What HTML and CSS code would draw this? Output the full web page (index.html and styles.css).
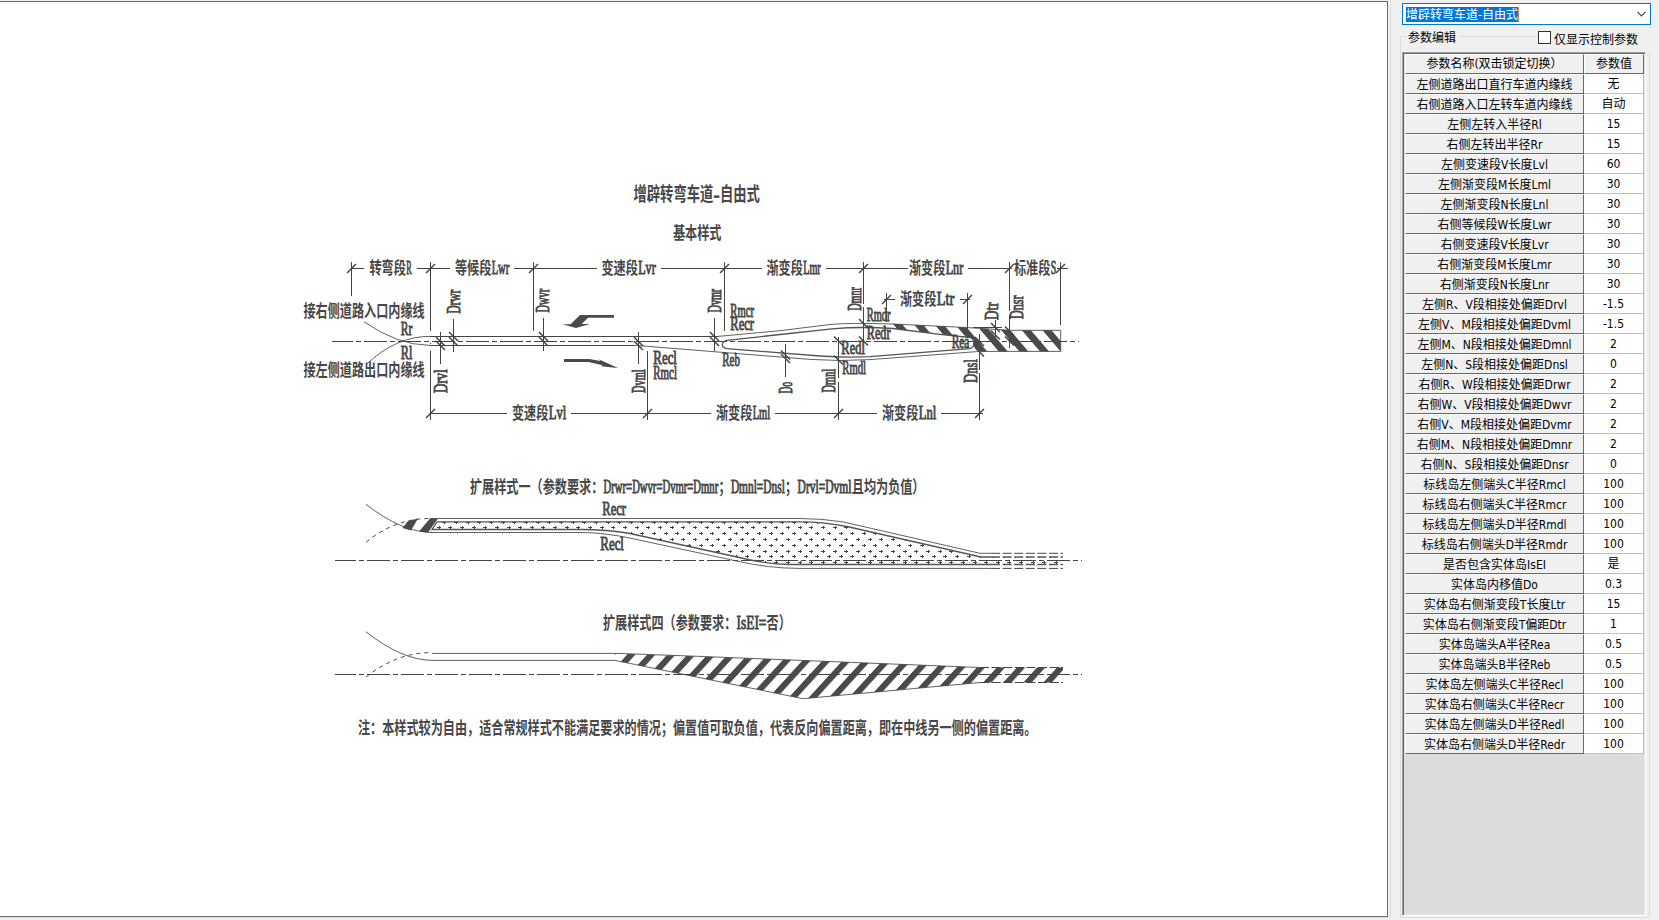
FILE: index.html
```html
<!DOCTYPE html>
<html lang="zh-CN">
<head>
<meta charset="utf-8">
<title>增辟转弯车道-自由式</title>
<link rel="stylesheet" href="styles.css">
</head>
<body>
<main class="app">
<section class="preview">
<svg class="drawing" width="1387" height="914" viewBox="0 2 1387 914">
<defs>
<pattern id="hatchBack" patternUnits="userSpaceOnUse" width="20.6" height="100" patternTransform="translate(1021.7 330) skewX(40.4)"><rect class="ink" width="9" height="100"/></pattern>
<pattern id="hatchFwd" patternUnits="userSpaceOnUse" width="20.08" height="100" patternTransform="translate(615.5 667.3) skewX(-42.4)"><rect class="ink" width="8.3" height="100"/></pattern>
<clipPath id="islandArea"><path d="M1062 564.5H790Q765 564 737 557L630 533.5Q608 529.5 580 529.5H432L437 521.8H800Q825 522 847 526.5L981 557H1062Z"/></clipPath>
</defs>

<g class="line">
<path class="center" d="M332 341.5H1079"/>
<path class="crisp" d="M430 336.5H718M430 345.5H634M351.5 268.5H364M417 268.5H450M514 268.5H597M661 268.5H762M826 268.5H908M968 268.5H1012M1057 268.5H1068M884 299.5H895M960 299.5H970M430 413.5H507M571 413.5H711M775 413.5H877M941 413.5H983"/>
<path class="crisp" d="M351.5 262V296M430.5 262V331M430.5 343V344M430.5 351V420M533.5 262V331M724.5 262V331M647.5 351V420M1060.5 262V325M886.5 293V322M967.5 293V329M863.5 262V304M863.5 307V345M1009.5 262V311M1009.5 315V348M838.5 337V378M838.5 382V420M979.5 334V370M979.5 373V420"/>
<path class="crisp" d="M440.5 332V364M453.5 319V352M543.5 318V351M638.5 332V364M714.5 318V351M785.5 344V377M995.5 320V338M973 327.5H1002"/>
<path class="thin" d="M364 321.7Q397 345 430 345.4M366.7 364Q397 336 430 336.4"/>
<path class="thin" d="M718 336.4L780 330.7L830 324.5Q850 322.6 893 324L966 327.5L1010 330.3H1060.7V351.4H980L870 359.6Q840 361.5 810 359.4L647 346.3L634 345.4"/>
<path class="edge" d="M727 340.4L780 334.5L832 328.8Q860 326.4 893 328.5L940 334.3L970 337.5C975 339 975 347.5 970 348.6L870 356.6Q845 357.8 820 356L727 348.6C721 347.5 720.5 342 727 340.4Z"/>
</g>
<path fill="url(#hatchBack)" d="M892 323.8L966 327.5L1010 330.3H1060.7V351.4H980L974 347V340L970 337.5L940 334.3L893 328.5Z"/>
<g transform="translate(530 170) scale(.33333)" class="ink">
<path d="M252 435H150L122 463H97L138 474L180 462H155L174 443H252Z"/>
<path d="M102 567H178L212 573L206 568L264 594L212 589L219 586L175 576H102Z"/>
</g>

<g class="line">
<path class="center" d="M335 560.5H1082"/>
<path class="thin" d="M366 504.3Q402 532.5 433 532.5"/>
<path class="dash" d="M366 542.3Q395 518.5 430 518.5"/>
<path class="thin" d="M430 532.5H582Q605 532.7 632 538.5L736.7 561Q768 568.4 800 568.4H991M430 518.5H800Q822 518.5 843 521.9L980 553.3H991"/>
<path class="edge" d="M991 564.5H790Q765 564 737 557L630 533.5Q608 529.5 580 529.5H432L437 521.8H800Q825 522 847 526.5L981 557H991"/>
<path class="island" d="M991 553.3H1063M991 568.4H1063"/>
<path class="island edge" d="M991 557H1063M991 564.5H1063"/>
<g clip-path="url(#islandArea)"><path id="crosses" class="crisp" d=""/></g>
</g>
<path class="ink" d="M408 521L418 518.5L411 530.5L402.5 528ZM430 518.5H438L428 532.5L419 531.5Z"/>

<path fill="url(#hatchFwd)" d="M615 653.4L700 656.4L980 667.5H1063V682.5H980L803 698.7L615 660.4Z"/>
<g class="line">
<path class="center" d="M335 674.5H1082"/>
<path class="thin" d="M366 631.7Q402 660.4 433 660.4H615L803 698.7L980 682.5M432 653.4H618L700 656.4L980 667.5"/>
<path class="dash" d="M366 677Q397 652.7 430 652.7"/>
<path class="island" d="M980 667.5H1063M980 682.5H1063"/>
</g>
<g id="labels" class="labels"></g>
</svg>
</section>

<aside class="panel">
<div class="combo"><span class="selected">增辟转弯车道-自由式</span><svg class="arrow" width="9" height="6" viewBox="0 0 9 6"><path d="M.5.8L4.5 4.8L8.5.8"/></svg></div>
<div class="group">
<div class="legend"><span class="stub"></span><span class="caption">参数编辑</span><span class="rule"></span><label class="only"><span class="box"></span><span class="only-text">仅显示控制参数</span></label></div>
<div class="frame"><div class="grid" id="grid"><div class="name head">参数名称(双击锁定切换）</div><div class="value head">参数值</div></div></div>
</div>
</aside>
</main>
<script src="script.js"></script>
</body>
</html>
```

FILE: styles.css
```css
* { box-sizing: border-box; }
body { margin: 0; background: #f0f0f0; color: #000; font: 12px "DejaVu Sans Condensed", "Noto Sans CJK SC", sans-serif; overflow: hidden; }
.app { display: flex; width: 1659px; height: 920px; }
.preview { width: 1391px; height: 918px; flex: none; border-right: 1px solid #dcdcdc; border-bottom: 1px solid #dcdcdc; padding: 1px 2px 0 0; }
.drawing { display: block; width: 1388px; height: 916px; background: #fff; border: solid #696969; border-width: 1px 1px 1px 0; }
.line { fill: none; stroke: #444; stroke-width: 1; }
.crisp { shape-rendering: crispEdges; }
.center { stroke-dasharray: 23 3 5 3; stroke-dashoffset: 2; shape-rendering: crispEdges; }
.thin { stroke-width: .85; }
.edge { stroke-width: 1.3; stroke: #555; }
.dash { stroke-dasharray: 4 4; }
.island { stroke-dasharray: 9 2.6; }
.ink { fill: #4a4a4a; }
.tick { stroke: #444; stroke-width: 1.5; }
.labels { fill: #484848; }
.cjk { font-family: "Noto Sans CJK SC", sans-serif; font-weight: 700; }
.latin { font-family: "Liberation Serif", serif; stroke: #484848; stroke-width: .9; }

.panel { flex: 1; display: flex; flex-direction: column; padding: 3px 8px 2px 9px; }
.combo { width: 249px; height: 22px; margin-left: 2px; border: 1px solid #0078d7; background: #fff; display: flex; align-items: center; justify-content: space-between; padding: 0 4px 0 3px; }
.selected { height: 15px; line-height: 16px; background: #0078d7; color: #fff; border-right: 1px solid #d98a3a; white-space: nowrap; }
.arrow { fill: none; stroke: #444; stroke-width: 1.2; }
.group { flex: 1; width: 250px; margin-top: 6px; display: flex; flex-direction: column; }
.legend { height: 21px; display: flex; align-items: flex-start; white-space: nowrap; }
.stub { width: 6px; height: 16px; margin-top: 5px; border: solid #dcdcdc; border-width: 1px 0 0 1px; }
.caption { line-height: 15px; margin-left: 2px; width: 51px; }
.rule { width: 79px; height: 1px; margin-top: 5px; background: #dcdcdc; }
.only { display: flex; }
.box { width: 13px; height: 13px; background: #fff; border: 1px solid #333; }
.only-text { line-height: 18px; margin-left: 3px; }
.frame { flex: 1; border: solid #dcdcdc; border-width: 0 1px 1px; padding: 0 3px 1px 1px; display: flex; }
.grid { flex: 1; background: #dcdcdc; border: 1px solid; border-color: #a0a0a0 #fff #fff #a0a0a0; box-shadow: inset 1px 1px #696969, inset -1px -1px #e3e3e3; display: grid; grid-template-columns: 179px 60px; grid-auto-rows: 20px; align-content: start; padding: 1px 1px 1px 2px; text-align: center; white-space: nowrap; }
.name { background: #f0f0f0; border: 1px solid; border-color: #fff #696969 #696969 #fff; line-height: 20px; }
.value { background: #fff; border: solid #c0c0c0; border-width: 0 1px 1px 0; line-height: 21px; }
.head { background: #f0f0f0; border: 1px solid; border-color: #fff #696969 #696969 #fff; line-height: 18px; }
```

FILE: script.js
```js
const SVG = 'http://www.w3.org/2000/svg';
const labels = document.getElementById('labels');

// x, baseline, text, upright (0) or rotated (1), width of a full-width character
const texts = [
  [633.5, 200.8, '增辟转弯车道-自由式', 0, 13.3], [673, 239.3, '基本样式'],
  [369.5, 274.4, '转弯段R'], [455, 274.4, '等候段Lwr'], [601.5, 274.4, '变速段Lvr'], [766.5, 274.4, '渐变段Lmr'],
  [909, 274.4, '渐变段Lnr'], [1014, 274.4, '标准段S'], [900, 304.7, '渐变段Ltr'],
  [303.5, 317, '接右侧道路入口内缘线'], [303.5, 376.4, '接左侧道路出口内缘线'],
  [400.5, 334.7, 'Rr'], [400.5, 359.3, 'Rl'], [730, 316.7, 'Rmcr'], [730, 330, 'Recr'],
  [653, 364, 'Recl'], [653, 378.7, 'Rmcl'], [722, 366, 'Reb'], [866.5, 320.7, 'Rmdr'], [866.5, 339.3, 'Redr'],
  [841, 354.3, 'Redl'], [842, 373.7, 'Rmdl'], [951.5, 347.7, 'Rea'],
  [460, 313.7, 'Drwr', 1], [549, 312.7, 'Dwvr', 1], [721, 312.7, 'Dvmr', 1], [446.5, 393.3, 'Drvl', 1],
  [644.7, 393.3, 'Dvml', 1], [791.5, 393.7, 'Do', 1], [860.5, 311, 'Dmnr', 1], [998, 320.3, 'Dtr', 1],
  [1023, 319.3, 'Dnsr', 1], [835, 392.7, 'Dmnl', 1], [977.3, 383, 'Dnsl', 1],
  [512, 419.4, '变速段Lvl'], [716, 419.4, '渐变段Lml'], [882, 419.4, '渐变段Lnl'],
  [470, 492.9, '扩展样式一（参数要求：Drwr=Dwvr=Dvmr=Dmnr；Dmnl=Dnsl；Drvl=Dvml且均为负值）'],
  [602, 514.5, 'Recr'], [600, 549.9, 'Recl'],
  [603, 629.3, '扩展样式四（参数要求：IsEI=否）'],
  [358, 733.9, '注：本样式较为自由，适合常规样式不能满足要求的情况；偏置值可取负值，代表反向偏置距离，即在中线另一侧的偏置距离。']
];
for (const [x, y, str, turned, cell = 12.12] of texts) {
  const group = document.createElementNS(SVG, 'g');
  group.setAttribute('transform', `translate(${x} ${y})${turned ? ' rotate(-90)' : ''}`);
  labels.appendChild(group);
  let at = 0;
  for (const run of str.match(/[\x20-\x7e]+|[^\x20-\x7e]+/g)) {
    const latin = run.charCodeAt(0) < 127;
    const t = document.createElementNS(SVG, 'text');
    const width = run.length * cell / (latin ? 2 : 1);
    t.setAttribute('class', latin ? 'latin' : 'cjk');
    t.setAttribute('font-size', cell * (latin ? 1.48 : 1.42));
    t.textContent = run;
    group.appendChild(t);
    // condense each run so that it fills its character cells
    const natural = t.getComputedTextLength();
    const inner = latin ? width - 0.6 : width;
    t.setAttribute('transform', `translate(${at + (width - inner) / 2} 0) scale(${inner / natural} 1)`);
    at += width;
  }
}

// Planting symbols of the raised island, staggered on a square grid
let crosses = '';
for (let row = 0; row < 10; row++) {
  const y = Math.round(521.5 + row * 5.83) + 0.5;
  for (let x = 426 + (row % 2 ? 1 : 6.8); x < 1064; x += 11.65) {
    const cx = Math.round(x) + 0.5;
    crosses += `M${cx - 2.5} ${y}h4M${cx} ${y - 1.5}v3`;
  }
}
document.getElementById('crosses').setAttribute('d', crosses);

// Oblique dimension ticks: forward for lengths, backward for offsets
const forward = [[351.5, 268.5], [430.5, 268.5], [533.5, 268.5], [724.5, 268.5], [863.5, 268.5], [1009.5, 268.5], [1060.5, 268.5],
  [886.5, 299.5], [967.5, 299.5], [430.5, 413.5], [647.5, 413.5], [838.5, 413.5], [979.5, 413.5]];
const backward = [[440.5, 341.5], [440.5, 345.5], [453.5, 336.5], [453.5, 341.5], [543.5, 336.5], [543.5, 341.5], [638.5, 341.5],
  [638.5, 345.5], [714.5, 336.5], [714.5, 341.5], [785.5, 355], [785.5, 358.5], [863.5, 323.5], [863.5, 341],
  [838.5, 341], [838.5, 360], [979.5, 341.5], [979.5, 352], [995.5, 327.5], [995.5, 335], [1009.5, 331], [1009.5, 341]];
const tick = (x, y, s) => {
  const p = document.createElementNS(SVG, 'path');
  p.setAttribute('class', 'tick');
  p.setAttribute('d', `M${x - 4.5} ${y + 4.5 * s}L${x + 4.5} ${y - 4.5 * s}`);
  labels.appendChild(p);
};
forward.forEach(([x, y]) => tick(x, y, 1));
backward.forEach(([x, y]) => tick(x, y, -1));

const params = [
  ['左侧道路出口直行车道内缘线', '无'], ['右侧道路入口左转车道内缘线', '自动'], ['左侧左转入半径Rl', '15'], ['右侧左转出半径Rr', '15'],
  ['左侧变速段V长度Lvl', '60'], ['左侧渐变段M长度Lml', '30'], ['左侧渐变段N长度Lnl', '30'], ['右侧等候段W长度Lwr', '30'],
  ['右侧变速段V长度Lvr', '30'], ['右侧渐变段M长度Lmr', '30'], ['右侧渐变段N长度Lnr', '30'],
  ['左侧R、V段相接处偏距Drvl', '-1.5'], ['左侧V、M段相接处偏距Dvml', '-1.5'], ['左侧M、N段相接处偏距Dmnl', '2'], ['左侧N、S段相接处偏距Dnsl', '0'],
  ['右侧R、W段相接处偏距Drwr', '2'], ['右侧W、V段相接处偏距Dwvr', '2'], ['右侧V、M段相接处偏距Dvmr', '2'], ['右侧M、N段相接处偏距Dmnr', '2'], ['右侧N、S段相接处偏距Dnsr', '0'],
  ['标线岛左侧端头C半径Rmcl', '100'], ['标线岛右侧端头C半径Rmcr', '100'], ['标线岛左侧端头D半径Rmdl', '100'], ['标线岛右侧端头D半径Rmdr', '100'],
  ['是否包含实体岛IsEI', '是'], ['实体岛内移值Do', '0.3'], ['实体岛右侧渐变段T长度Ltr', '15'], ['实体岛右侧渐变段T偏距Dtr', '1'],
  ['实体岛端头A半径Rea', '0.5'], ['实体岛端头B半径Reb', '0.5'], ['实体岛左侧端头C半径Recl', '100'], ['实体岛右侧端头C半径Recr', '100'],
  ['实体岛左侧端头D半径Redl', '100'], ['实体岛右侧端头D半径Redr', '100']
];
const grid = document.getElementById('grid');
for (const [name, value] of params) {
  for (const [cls, text] of [['name', name], ['value', value]]) {
    const cell = document.createElement('div');
    cell.className = cls;
    cell.textContent = text;
    grid.appendChild(cell);
  }
}
```
